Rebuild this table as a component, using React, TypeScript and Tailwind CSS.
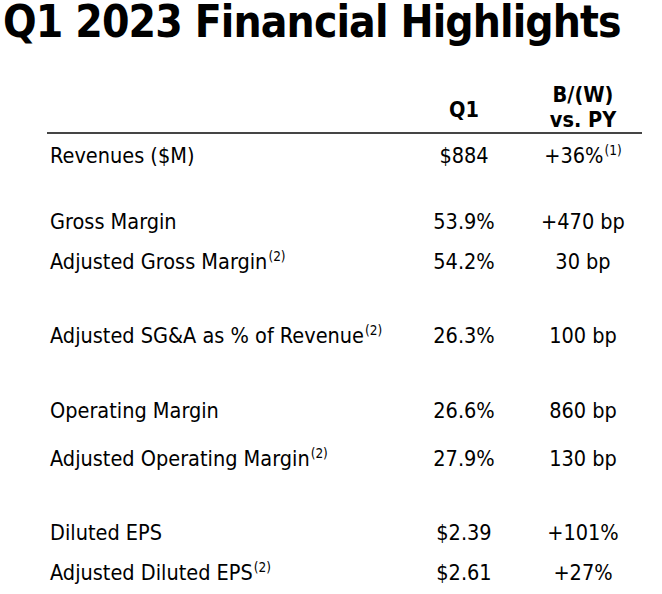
import React from 'react';

interface Row {
  label: string;
  note?: string;
  q1: string;
  vs: string;
  vsNote?: string;
  gap: string;
}

// gaps between rows follow the slide's grouping
const rows: Row[] = [
  { label: 'Revenues ($M)', q1: '$884', vs: '+36%', vsNote: '(1)', gap: 'mt-[9px]' },
  { label: 'Gross Margin', q1: '53.9%', vs: '+470 bp', gap: 'mt-[40px]' },
  { label: 'Adjusted Gross Margin', note: '(2)', q1: '54.2%', vs: '30 bp', gap: 'mt-[14px]' },
  { label: 'Adjusted SG&A as % of Revenue', note: '(2)', q1: '26.3%', vs: '100 bp', gap: 'mt-[48px]' },
  { label: 'Operating Margin', q1: '26.6%', vs: '860 bp', gap: 'mt-[49px]' },
  { label: 'Adjusted Operating Margin', note: '(2)', q1: '27.9%', vs: '130 bp', gap: 'mt-[22px]' },
  { label: 'Diluted EPS', q1: '$2.39', vs: '+101%', gap: 'mt-[48px]' },
  { label: 'Adjusted Diluted EPS', note: '(2)', q1: '$2.61', vs: '+27%', gap: 'mt-[14px]' },
];

function Note({ children }: { children: React.ReactNode }) {
  return <sup className="text-[13.5px] -top-[8px] ml-[1px]">{children}</sup>;
}

export default function App() {
  return (
    <div className="w-[662px] h-[594px] bg-white text-black overflow-hidden font-['DejaVu_Sans_Condensed','DejaVu_Sans',sans-serif] [font-stretch:condensed]">
      <h1 className="-mt-[4px] pl-[3px] text-[44px] leading-[52px] font-bold tracking-[-0.9px] whitespace-nowrap">
        Q1 2023 Financial Highlights
      </h1>

      <div className="mt-[34px] ml-[47px] w-[595px]">
        <div className="grid grid-cols-[357px_120px_118px] font-bold text-[21.5px] leading-[25px]">
          <div />
          <div className="flex items-end justify-center pb-[10px]">Q1</div>
          <div className="text-center">
            B/(W)
            <br />
            vs. PY
          </div>
        </div>
        <div className="h-[2px] bg-[#454545]" />

        {rows.map((r) => (
          <div
            key={r.label}
            className={`grid grid-cols-[357px_120px_118px] text-[21.5px] leading-[26px] whitespace-nowrap ${r.gap}`}
          >
            <div className="pl-[3px]">
              {r.label}
              {r.note && <Note>{r.note}</Note>}
            </div>
            <div className="text-center">{r.q1}</div>
            <div className="text-center">
              {r.vs}
              {r.vsNote && <Note>{r.vsNote}</Note>}
            </div>
          </div>
        ))}
      </div>
    </div>
  );
}
